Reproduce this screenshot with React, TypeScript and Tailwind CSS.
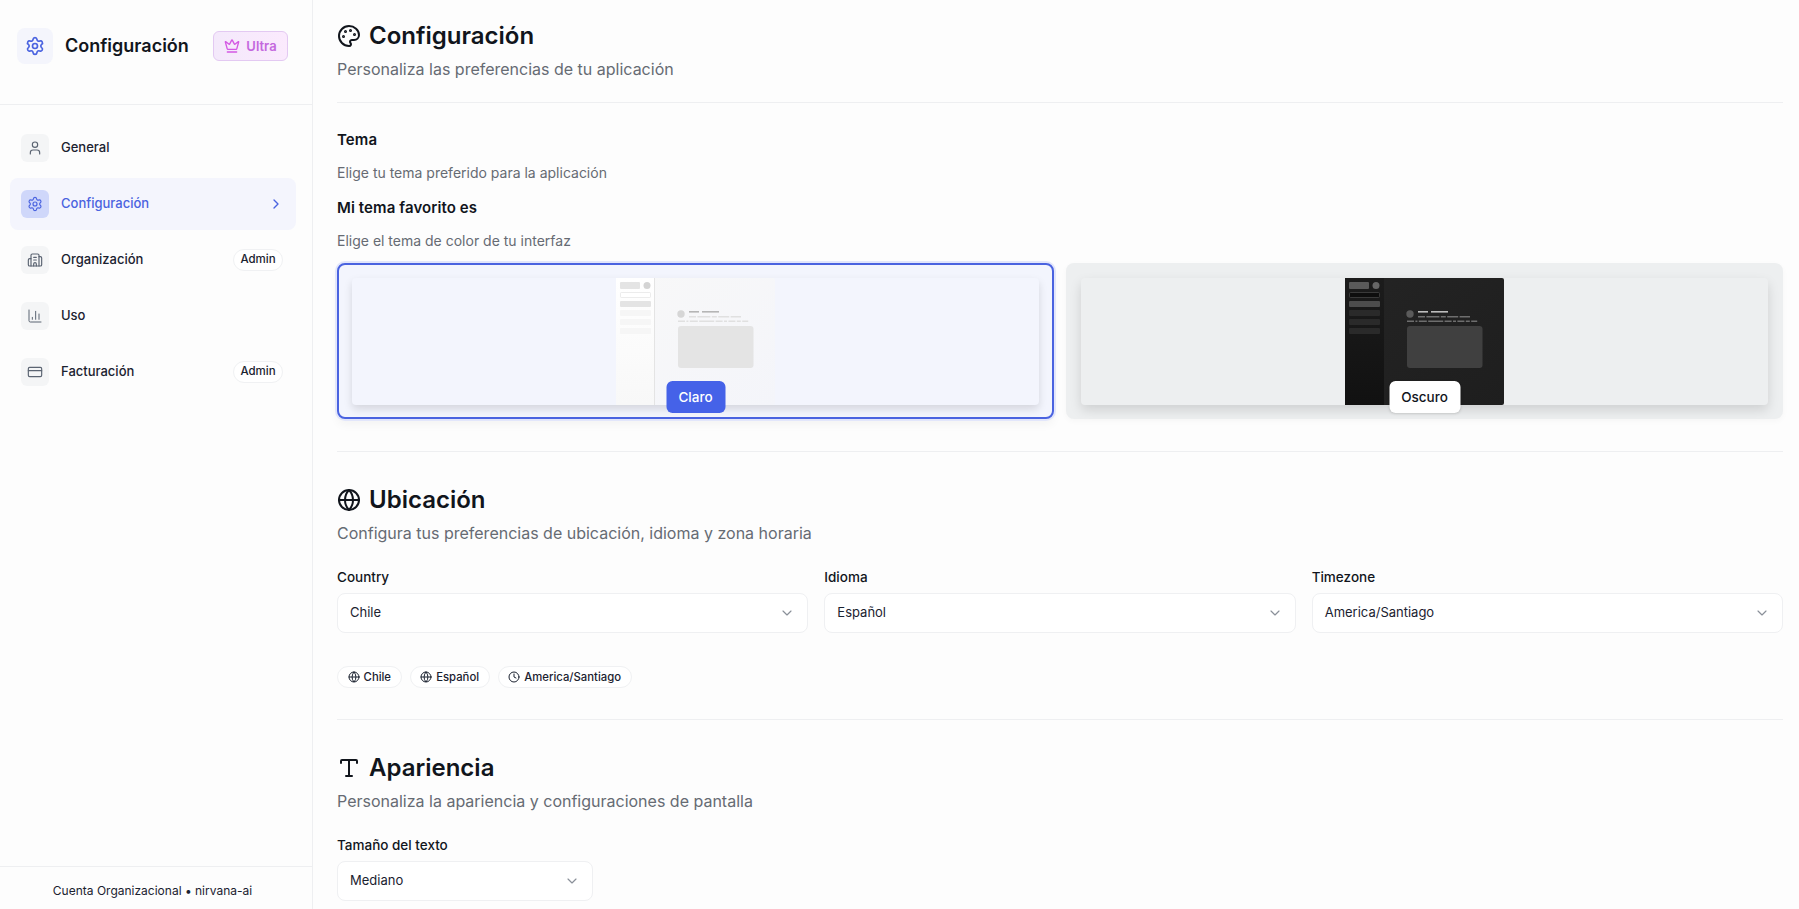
import React from "react";
import { Settings, User, Building2, ChartColumn, CreditCard, Crown, Palette, Globe, Type, ChevronDown, ChevronRight, Clock } from "lucide-react";

function Thumb({ dark }: { dark?: boolean }) {
  const c = dark
    ? { sideA: "#1c1c1c", sideB: "#111111", mainA: "#242424", mainB: "#1e1e1e", pill: "#5a5a5a", circle: "#666666", input: "#0e0e0e", inputB: "#4a4a4a", bar: "#4d4d4d", faint: "#2a2a2a", line: "#bdbdbd", sub: "#6e6e6e", block: "#404040", div: "#202020", av: "#5a5a5a" }
    : { sideA: "#ffffff", sideB: "#f8f8f8", mainA: "#f8f8f8", mainB: "#f4f5fa", pill: "#e4e4e4", circle: "#d4d4d4", input: "#ffffff", inputB: "#e4e4e4", bar: "#e4e4e4", faint: "#f6f6f6", line: "#b5b5b5", sub: "#e0e0e0", block: "#e4e4e4", div: "#e4e4e4", av: "#d6d6d6" };
  const id = dark ? "d" : "l";
  return (
    <svg width="159" height="127" viewBox="0 0 159 127" className="block shrink-0 blur-[0.3px]">
      <defs>
        <linearGradient id={`side-${id}`} x1="0" y1="0" x2="0" y2="1">
          <stop offset="0" stopColor={c.sideA} />
          <stop offset="1" stopColor={c.sideB} />
        </linearGradient>
        <linearGradient id={`main-${id}`} x1="0" y1="0" x2="1" y2="1">
          <stop offset="0" stopColor={c.mainA} />
          <stop offset="1" stopColor={c.mainB} />
        </linearGradient>
      </defs>
      <rect x="0" y="0" width="159" height="127" rx="2" fill={`url(#main-${id})`} />
      <rect x="0" y="0" width="39" height="127" fill={`url(#side-${id})`} />
      {!dark && <rect x="38" y="0" width="1" height="127" fill={c.div} />}
      <rect x="4" y="4" width="20" height="7" rx="1" fill={c.pill} />
      <circle cx="31" cy="7.5" r="3.5" fill={c.circle} />
      <rect x="4.5" y="14.5" width="30" height="5" rx="1" fill={c.input} stroke={c.inputB} strokeWidth="0.7" />
      <rect x="4" y="23" width="31" height="6" rx="1" fill={c.bar} />
      <rect x="4" y="32" width="31" height="6" rx="1" fill={c.faint} />
      <rect x="4" y="41" width="31" height="6" rx="1" fill={c.faint} />
      <rect x="4" y="50" width="31" height="6" rx="1" fill={c.faint} />
      <circle cx="65" cy="36" r="3.7" fill={c.av} />
      <rect x="73" y="33" width="10" height="1.6" fill={c.line} />
      <rect x="86" y="33" width="17" height="1.6" fill={c.line} />
      <line x1="73" y1="38.8" x2="125" y2="38.8" stroke={c.sub} strokeWidth="1.6" strokeDasharray="7 1.4 13 1.4 5 1.4 11 1.4 12 1" />
      <line x1="62" y1="43.3" x2="134" y2="43.3" stroke={c.sub} strokeWidth="1.6" strokeDasharray="7 1.4 2 1.4 8 1.4 15 1.4 7 1.4 3 1.4 7 1.4 4 1.4 6" />
      <rect x="62" y="48" width="75.5" height="42" rx="3" fill={c.block} />
    </svg>
  );
}

function NavItem({ icon, label, active, badge }: { icon: React.ReactNode; label: string; active?: boolean; badge?: boolean }) {
  return (
    <div className={active ? "flex h-[52px] items-center rounded-lg bg-[#f4f5fd] pl-[11px] pr-[13px]" : "flex h-[52px] items-center rounded-lg pl-[11px] pr-[13px]"}>
      <div className={active ? "flex h-[28px] w-[28px] items-center justify-center rounded-md bg-[#cfd7fa] text-[#4a63e0]" : "flex h-[28px] w-[28px] items-center justify-center rounded-md bg-[#f4f5f6] text-[#5b6472]"}>
        {icon}
      </div>
      <span className={active ? "ml-[12px] flex-1 text-[13px] font-medium text-[#4a63e0]" : "ml-[12px] flex-1 text-[13px] font-medium text-[#1b2230]"}>{label}</span>
      {active && <ChevronRight size={16} strokeWidth={2} className="-mr-[1px] text-[#4a63e0]" />}
      {badge && (
        <span className="flex h-[22px] w-[50px] items-center justify-center rounded-full border border-[#f0f1f3] bg-white text-[11.5px] font-medium text-[#1b2230]">Admin</span>
      )}
    </div>
  );
}

function Heading({ icon, title, sub }: { icon: React.ReactNode; title: string; sub: string }) {
  return (
    <div>
      <div className="flex h-[32px] items-center gap-[8px] pt-px">
        {icon}
        <h2 className="text-[24px] leading-[32px] font-semibold text-[#11151c]">{title}</h2>
      </div>
      <p className="mt-[6px] text-[16px] leading-[24px] text-[#666b73]">{sub}</p>
    </div>
  );
}

function SelectBox({ label, value, className }: { label: string; value: string; className?: string }) {
  return (
    <div className={className}>
      <div className="text-[13.5px] leading-[20px] font-medium text-[#11151c]">{label}</div>
      <div className="mt-[6px] flex h-[40px] items-center justify-between rounded-lg border border-[#eff0f2] bg-white pl-[12px] pr-[12px]">
        <span className="text-[13px] text-[#1b2230]">{value}</span>
        <ChevronDown size={16} strokeWidth={1.75} className="text-[#8a9099]" />
      </div>
    </div>
  );
}

function Chip({ icon, label }: { icon: React.ReactNode; label: string }) {
  return (
    <span className="flex h-[22px] items-center gap-[4px] rounded-full border border-[#f0f1f3] bg-white px-[9.6px] text-[11.3px] font-medium text-[#1b2230]">
      {icon}
      {label}
    </span>
  );
}

function ThemeCard({ dark, active, label }: { dark?: boolean; active?: boolean; label: string }) {
  return (
    <div className={active
      ? "relative flex h-[156px] rounded-lg border-2 border-[#4a63e0] bg-[#f3f5fd] px-[13px] pt-[13px] shadow-[0_0_0_2px_#e2e6fb,0_6px_10px_rgba(0,0,0,0.04)]"
      : "relative flex h-[156px] rounded-lg border-2 border-transparent bg-[#edeff0] px-[13px] pt-[13px] shadow-[0_2px_6px_rgba(0,0,0,0.03)]"}>
      <div className={active
        ? "flex h-[127px] flex-1 justify-center rounded-sm bg-[#f3f5fd] shadow-[0_4px_8px_rgba(0,0,0,0.13)]"
        : "flex h-[127px] flex-1 justify-center rounded-sm bg-[#edeff0] shadow-[0_5px_12px_rgba(0,0,0,0.13)]"}>
        <Thumb dark={dark} />
      </div>
      <div className={active
        ? "absolute bottom-[4px] left-1/2 flex h-[32px] w-[59px] -translate-x-1/2 items-center justify-center rounded-md bg-[#4562e8] text-[13.5px] font-medium text-white"
        : "absolute bottom-[4px] left-1/2 flex h-[32px] w-[71px] -translate-x-1/2 items-center justify-center rounded-md bg-white text-[13.5px] font-medium text-[#11151c] shadow-sm"}>
        {label}
      </div>
    </div>
  );
}

export default function App() {
  return (
    <div className="flex h-[909px] w-full overflow-hidden bg-[#fdfdfd] font-['Inter',sans-serif]">
      <aside className="flex h-full w-[313px] shrink-0 flex-col border-r border-[#eeeff1]">
        <div className="flex h-[105px] items-center border-b border-[#eeeff1] pb-[13px] pl-[17px] pr-[24px]">
          <div className="flex h-[36px] w-[36px] items-center justify-center rounded-lg bg-[#f4f5fc] text-[#4a63e0]">
            <Settings size={20} strokeWidth={2} />
          </div>
          <span className="ml-[12px] flex-1 text-[18px] font-semibold text-[#11151c]">Configuración</span>
          <div className="flex h-[30px] w-[75px] items-center justify-center gap-[6px] rounded-md border border-[#e3c9f2] bg-gradient-to-r from-[#f4e9fb] to-[#fbeafd] text-[13px] font-semibold text-[#c468de]">
            <Crown size={16} strokeWidth={2} className="text-[#d458e3]" />
            <span className="pt-[2px]">Ultra</span>
          </div>
        </div>
        <nav className="flex flex-1 flex-col gap-[4px] px-[10px] pt-[17px] pr-[16px]">
          <NavItem icon={<User size={16} strokeWidth={1.75} />} label="General" />
          <NavItem icon={<Settings size={16} strokeWidth={1.75} />} label="Configuración" active />
          <NavItem icon={<Building2 size={16} strokeWidth={1.75} />} label="Organización" badge />
          <NavItem icon={<ChartColumn size={16} strokeWidth={1.5} />} label="Uso" />
          <NavItem icon={<CreditCard size={16} strokeWidth={1.75} />} label="Facturación" badge />
        </nav>
        <div className="flex h-[43px] items-center justify-center border-t border-[#eeeff1] pt-[5px] pr-[7px] text-[12px] text-[#1b2230]">
          Cuenta Organizacional • nirvana-ai
        </div>
      </aside>
      <main className="min-w-0 flex-1 pl-[24px] pr-[16px] pt-[19px]">
        <Heading icon={<Palette size={24} strokeWidth={2} className="text-[#11151c]" />} title="Configuración" sub="Personaliza las preferencias de tu aplicación" />
        <div className="mt-[21px] h-px bg-[#eeeff1]" />
        <div className="mt-[25px] text-[15px] leading-[24px] font-semibold tracking-[0.1px] text-[#11151c]">Tema</div>
        <p className="mt-[11px] text-[14px] leading-[20px] text-[#666b73]">Elige tu tema preferido para la aplicación</p>
        <div className="mt-[13px] text-[15px] leading-[24px] font-semibold tracking-[0.1px] text-[#11151c]">Mi tema favorito es</div>
        <p className="mt-[11px] text-[14px] leading-[20px] text-[#666b73]">Elige el tema de color de tu interfaz</p>
        <div className="mt-[12px] grid grid-cols-2 gap-[12px]">
          <ThemeCard active label="Claro" />
          <ThemeCard dark label="Oscuro" />
        </div>
        <div className="mt-[32px] h-px bg-[#eeeff1]" />
        <div className="mt-[31px]">
          <Heading icon={<Globe size={24} strokeWidth={2} className="text-[#11151c]" />} title="Ubicación" sub="Configura tus preferencias de ubicación, idioma y zona horaria" />
        </div>
        <div className="mt-[22px] grid grid-cols-3 gap-[16px]">
          <SelectBox label="Country" value="Chile" />
          <SelectBox label="Idioma" value="Español" />
          <SelectBox label="Timezone" value="America/Santiago" />
        </div>
        <div className="mt-[33px] flex gap-[8px]">
          <Chip icon={<Globe size={12} strokeWidth={2} />} label="Chile" />
          <Chip icon={<Globe size={12} strokeWidth={2} />} label="Español" />
          <Chip icon={<Clock size={12} strokeWidth={2} />} label="America/Santiago" />
        </div>
        <div className="mt-[31px] h-px bg-[#eeeff1]" />
        <div className="mt-[31px]">
          <Heading icon={<Type size={24} strokeWidth={2} className="text-[#11151c]" />} title="Apariencia" sub="Personaliza la apariencia y configuraciones de pantalla" />
        </div>
        <SelectBox label="Tamaño del texto" value="Mediano" className="mt-[22px] w-[256px]" />
      </main>
    </div>
  );
}
